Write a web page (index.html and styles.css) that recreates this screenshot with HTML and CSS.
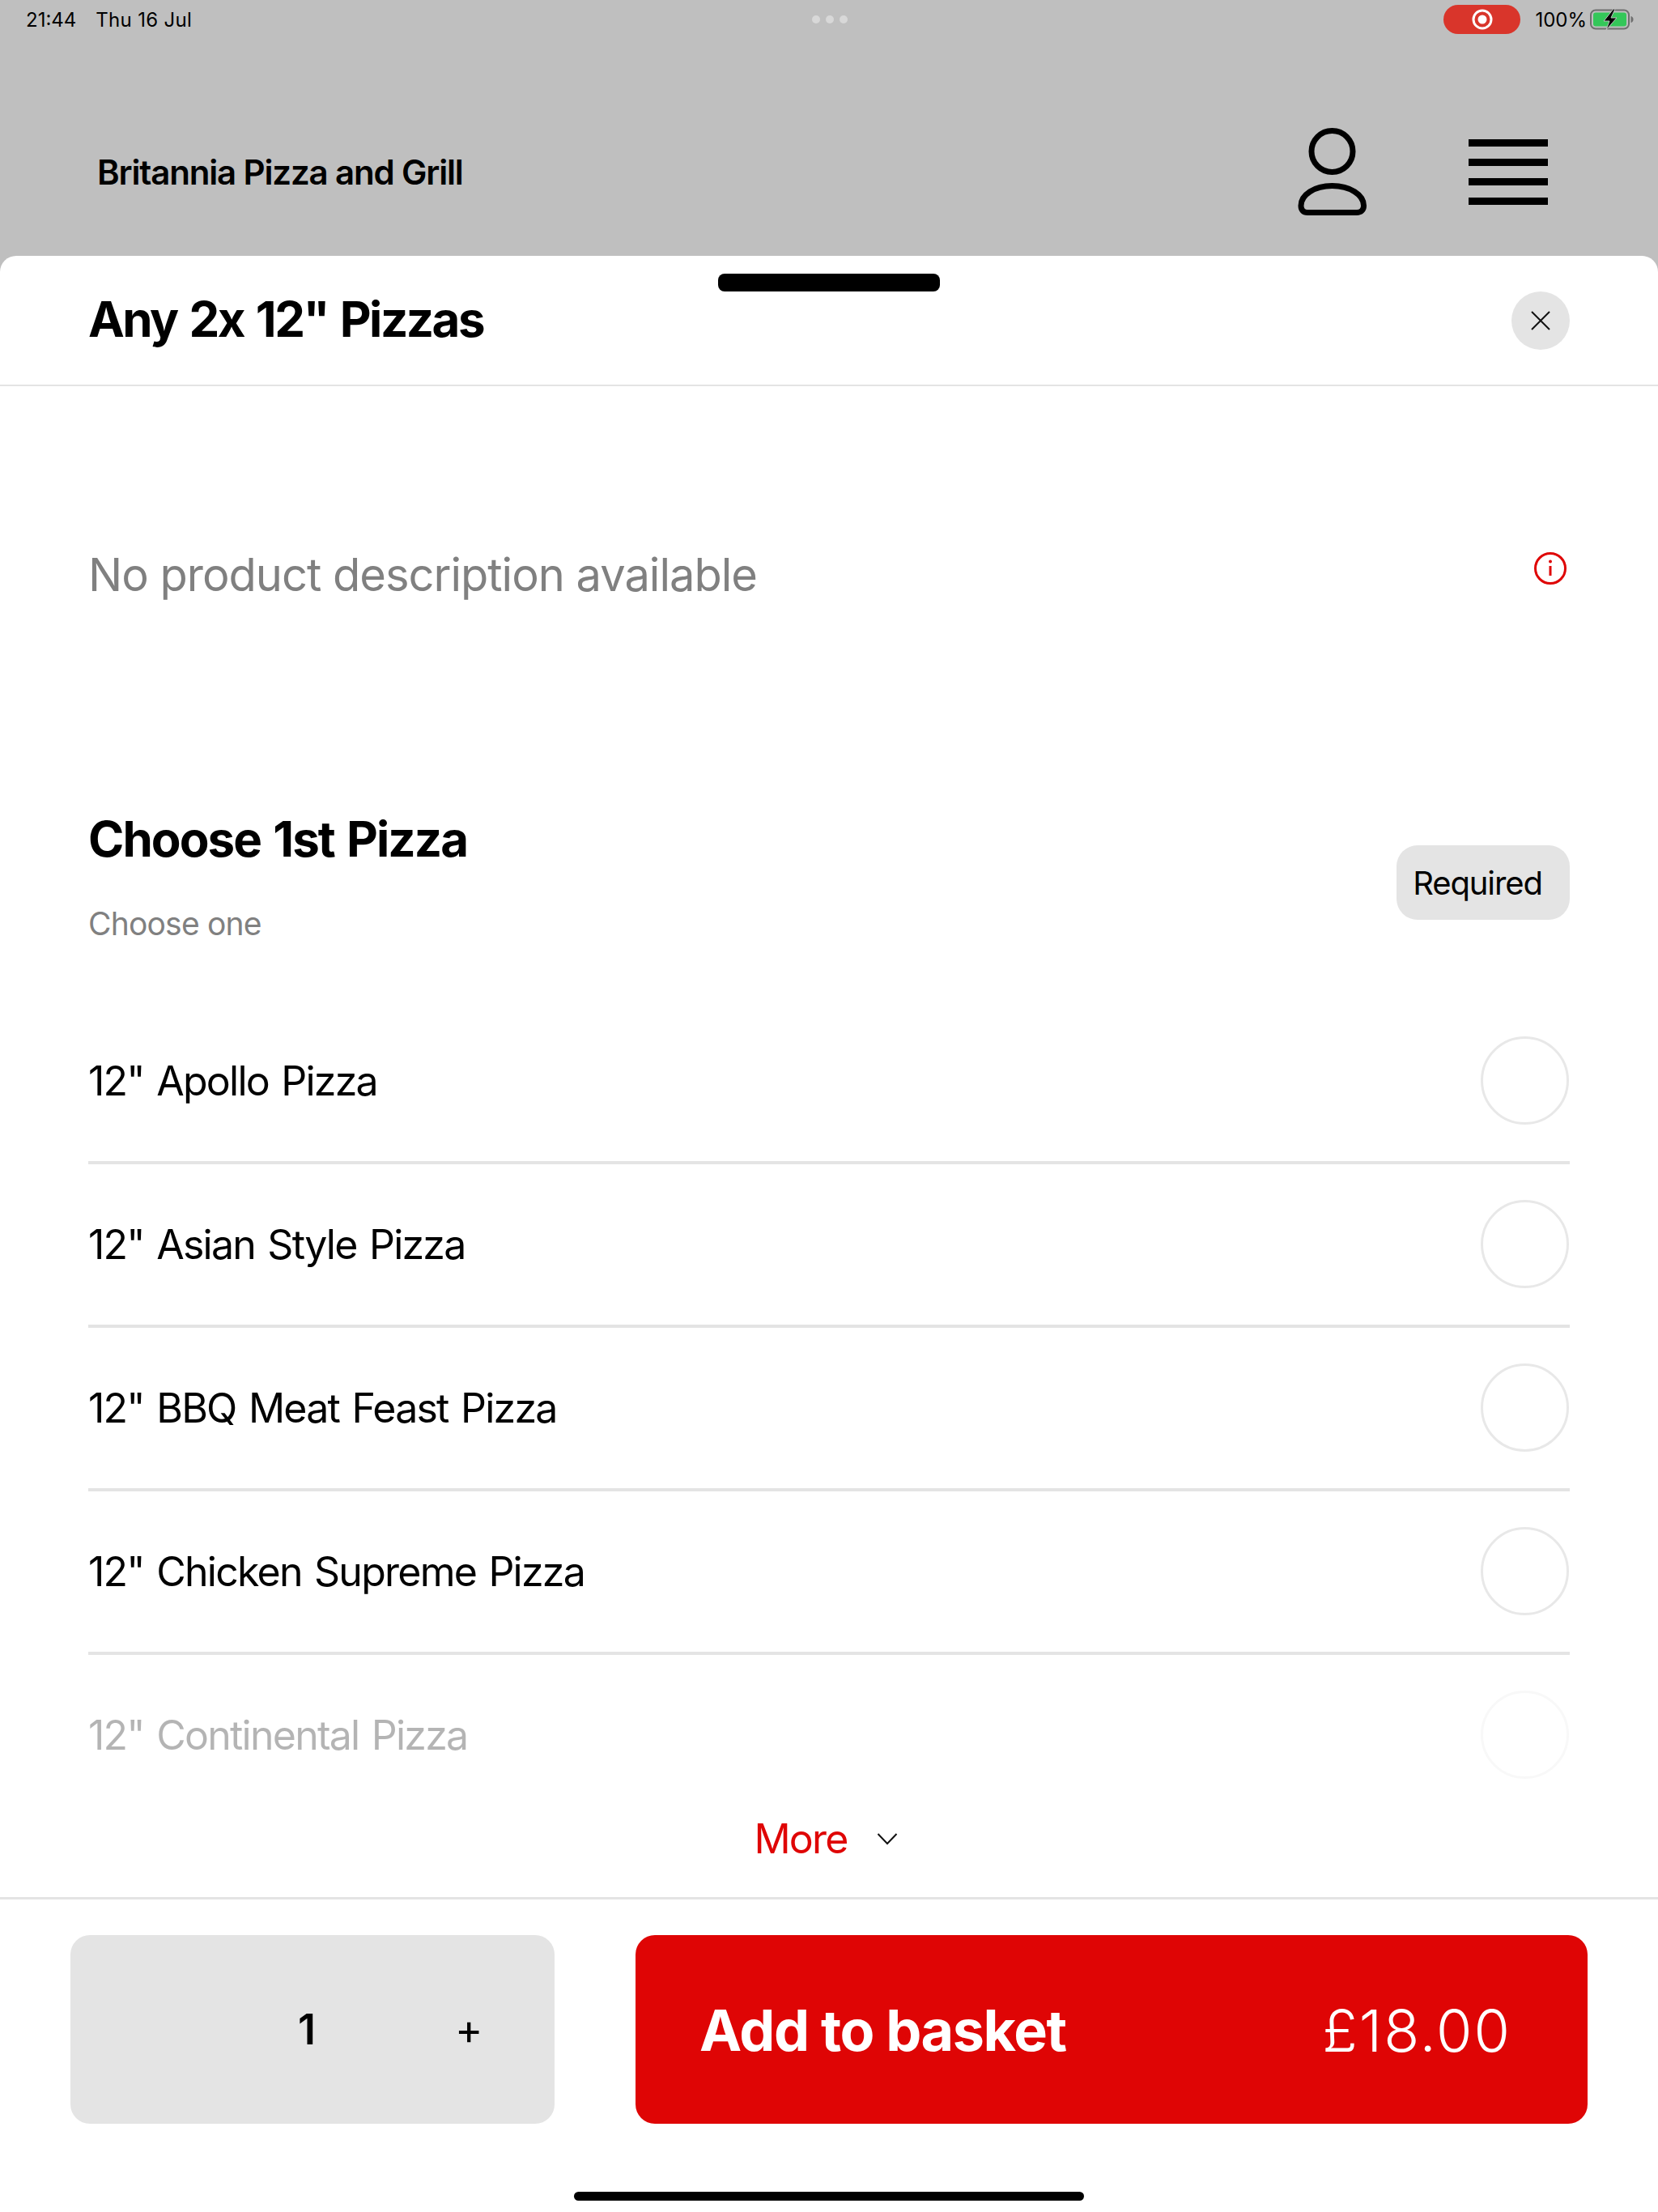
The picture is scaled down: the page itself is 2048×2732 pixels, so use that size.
FILE: index.html
```html
<!DOCTYPE html>
<html lang="en">
<head>
    <meta charset="UTF-8">
    <meta name="viewport" content="width=device-width, initial-scale=1.0">
    <title>Britannia Pizza and Grill</title>
    <link rel="stylesheet" href="styles.css">
</head>
<body>
<div class="status-bar">
    <div class="status-left">
        <span>21:44</span>
        <span class="status-date">Thu 16 Jul</span>
    </div>
    <div class="status-dots"><i></i><i></i><i></i></div>
    <div class="status-right">
        <div class="record-pill">
            <svg width="26" height="26" viewBox="0 0 26 26"><circle cx="13" cy="13" r="11" fill="none" stroke="#fff" stroke-width="3"/><circle cx="13" cy="13" r="5.5" fill="#fff"/></svg>
        </div>
        <span class="battery-text">100%</span>
        <svg class="battery" width="54" height="26" viewBox="0 0 54 26">
            <rect x="1" y="1.5" width="47" height="23" rx="6" fill="none" stroke="#6f6f6f" stroke-width="2"/>
            <rect x="4" y="4.5" width="41" height="17" rx="3" fill="#34c759"/>
            <path d="M50.5 9c2 .6 3 2 3 4s-1 3.400-3 4z" fill="#6f6f6f"/>
            <path d="M29 0 17 15h7l-4 11 13-15h-7l5-11z" fill="#000" stroke="#bfbfbf" stroke-width="1"/>
        </svg>
    </div>
</div>

<header class="site-header">
    <div class="site-name">Britannia Pizza and Grill</div>
    <svg class="user-icon" width="86" height="108" viewBox="0 0 86 108">
        <ellipse cx="42.500" cy="29" rx="25.500" ry="25.500" fill="none" stroke="#000" stroke-width="7"/>
        <path d="M42.500 71.500c-22 0-38.500 11-38.500 24.500 0 5.500 3 8.500 8 8.500h61c5 0 8.500-3 8.500-8.500 0-13.500-17-24.500-39-24.500z" fill="none" stroke="#000" stroke-width="7"/>
    </svg>
    <div class="menu-icon"><i></i><i></i><i></i><i></i></div>
</header>

<main class="sheet">
    <div class="handle"></div>
    <div class="sheet-title-row">
        <h1>Any 2x 12" Pizzas</h1>
        <button class="close-btn">
            <svg width="28" height="28" viewBox="0 0 28 28"><path d="M3 3 25 25M25 3 3 25" stroke="#111" stroke-width="2" fill="none"/></svg>
        </button>
    </div>

    <div class="description">
        <p>No product description available</p>
        <svg class="info-icon" width="40" height="40" viewBox="0 0 40 40">
            <circle cx="20" cy="20" r="18.500" fill="none" stroke="#df0505" stroke-width="3"/>
            <circle cx="20" cy="11.500" r="2" fill="#df0505"/>
            <rect x="18.500" y="17" width="3" height="12" fill="#df0505"/>
        </svg>
    </div>

    <div class="group-head">
        <div>
            <h2>Choose 1st Pizza</h2>
            <div class="group-note">Choose one</div>
        </div>
        <div class="required-tag">Required</div>
    </div>

    <div class="option-list">
        <div class="option"><span>12" Apollo Pizza</span><div class="radio"></div></div>
        <div class="option"><span>12" Asian Style Pizza</span><div class="radio"></div></div>
        <div class="option"><span>12" BBQ Meat Feast Pizza</span><div class="radio"></div></div>
        <div class="option"><span>12" Chicken Supreme Pizza</span><div class="radio"></div></div>
        <div class="option option-faded"><span>12" Continental Pizza</span><div class="radio"></div></div>
    </div>

    <div class="more-row">
        <span>More</span>
        <svg width="26" height="16" viewBox="0 0 26 16"><path d="M1.500 2 13 14 24.500 2" fill="none" stroke="#111" stroke-width="2"/></svg>
    </div>

    <div class="sheet-footer">
        <div class="qty-box">
            <span class="qty-value">1</span>
            <span class="qty-plus">+</span>
        </div>
        <button class="add-btn">
            <span class="add-label">Add to basket</span>
            <span class="add-price">£18.00</span>
        </button>
    </div>
    <div class="home-bar"></div>
</main>
</body>
</html>
```

FILE: styles.css
```css
* {
    box-sizing: border-box;
}
html, body {
    margin: 0;
    padding: 0;
}
body {
    width: 2048px;
    height: 2732px;
    overflow: hidden;
    display: flex;
    flex-direction: column;
    background-color: #bfbfbf;
    font-family: Inter, "Liberation Sans", sans-serif;
    color: #000;
}

/* status bar */
.status-bar {
    height: 48px;
    display: grid;
    grid-template-columns: 1fr auto 1fr;
    align-items: center;
    padding: 0 30px 0 32px;
    font-size: 24px;
}
.status-left {
    display: flex;
    gap: 24px;
}
.status-date {
    letter-spacing: 0.3px;
}
.status-dots {
    display: flex;
    gap: 7px;
}
.status-dots i {
    width: 10px;
    height: 10px;
    border-radius: 50%;
    background-color: #d8d8d8;
}
.status-right {
    display: flex;
    align-items: center;
    justify-content: flex-end;
}
.record-pill {
    width: 95px;
    height: 36px;
    border-radius: 18px;
    background-color: #d9352b;
    display: flex;
    align-items: center;
    justify-content: center;
    margin-right: 18px;
}
.battery-text {
    margin-right: 4px;
}

/* site header */
.site-header {
    height: 268px;
    display: flex;
    align-items: center;
    padding: 60px 136px 0 120px;
}
.site-name {
    font-size: 42px;
    font-weight: 600;
    letter-spacing: -1.15px;
    flex: 1;
}
.user-icon {
    margin-right: 125px;
}
.menu-icon {
    width: 98px;
    display: flex;
    flex-direction: column;
    gap: 15px;
}
.menu-icon i {
    height: 9px;
    background-color: #000;
}

/* sheet */
.sheet {
    flex: 1;
    position: relative;
    display: flex;
    flex-direction: column;
    background-color: #fff;
    border-radius: 20px 20px 0 0;
}
.handle {
    position: absolute;
    top: 22px;
    left: 887px;
    width: 274px;
    height: 22px;
    border-radius: 8px;
    background-color: #000;
}
.sheet-title-row {
    height: 161px;
    display: flex;
    justify-content: space-between;
    align-items: center;
    padding: 0 109px;
    border-bottom: 2px solid #e4e4e4;
}
h1 {
    margin: -3px 0 0 0;
    font-size: 60px;
    font-weight: 700;
    letter-spacing: -2.5px;
    word-spacing: 3px;
}
.close-btn {
    width: 72px;
    height: 72px;
    border: none;
    border-radius: 50%;
    background-color: #e4e4e4;
    display: flex;
    align-items: center;
    justify-content: center;
    padding: 0;
}
.description {
    height: 524px;
    display: flex;
    justify-content: space-between;
    align-items: flex-start;
    padding: 198px 113px 0 109px;
}
.description p {
    margin: 0;
    font-size: 56px;
    line-height: 70px;
    letter-spacing: -1px;
    color: #808080;
}
.info-icon {
    margin-top: 7px;
}
.group-head {
    height: 279px;
    display: flex;
    justify-content: space-between;
    align-items: flex-start;
    padding: 0 109px;
}
h2 {
    margin: 0 0 46px 0;
    font-size: 60px;
    line-height: 70px;
    font-weight: 700;
    letter-spacing: -1.95px;
    word-spacing: 3px;
}
.group-note {
    font-size: 39px;
    line-height: 48px;
    letter-spacing: -0.8px;
    color: #808080;
}
.required-tag {
    margin-top: 43px;
    width: 214px;
    height: 92px;
    padding-right: 14px;
    border-radius: 26px;
    background-color: #e4e4e4;
    font-size: 40px;
    letter-spacing: -1.1px;
    display: flex;
    align-items: center;
    justify-content: center;
}
.option-list {
    padding: 0 109px;
}
.option {
    height: 158px;
    padding: 0 1px 45px 0;
    display: flex;
    justify-content: space-between;
    align-items: center;
    border-bottom: 4px solid #e4e4e4;
    margin-bottom: 44px;
    font-size: 50px;
    letter-spacing: -1.75px;
    word-spacing: 3px;
}
.option-faded {
    height: 109px;
    padding-bottom: 0;
    border-bottom: none;
    margin-bottom: 0;
    opacity: 0.29;
}
.radio {
    width: 109px;
    height: 109px;
    flex-shrink: 0;
    border-radius: 50%;
    border: 3px solid #e8e8e8;
}
.more-row {
    height: 146px;
    padding-top: 2px;
    padding-right: 8px;
    display: flex;
    justify-content: center;
    align-items: center;
    gap: 36px;
    font-size: 50px;
    letter-spacing: -1.8px;
    color: #df0505;
}
.sheet-footer {
    flex: 1;
    border-top: 3px solid #e4e4e4;
    display: flex;
    justify-content: space-between;
    padding: 44px 87px 0 87px;
}
.qty-box {
    width: 598px;
    height: 233px;
    background-color: #e4e4e4;
    border-radius: 24px;
    display: flex;
    align-items: center;
    font-size: 52px;
    font-weight: 600;
    padding-left: 281px;
}
.qty-plus {
    margin-left: 172px;
    font-weight: 400;
}
.add-btn {
    width: 1176px;
    height: 233px;
    border: none;
    border-radius: 24px;
    background-color: #df0505;
    color: #fff;
    font-family: inherit;
    display: flex;
    justify-content: space-between;
    align-items: center;
    padding: 2px 94px 0 79px;
}
.add-label {
    font-size: 70px;
    font-weight: 700;
    letter-spacing: -1.4px;
}
.add-price {
    font-size: 72px;
    font-weight: 300;
    letter-spacing: 2px;
}
.home-bar {
    position: absolute;
    left: 709px;
    bottom: 14px;
    width: 630px;
    height: 11px;
    border-radius: 6px;
    background-color: #000;
}
```
